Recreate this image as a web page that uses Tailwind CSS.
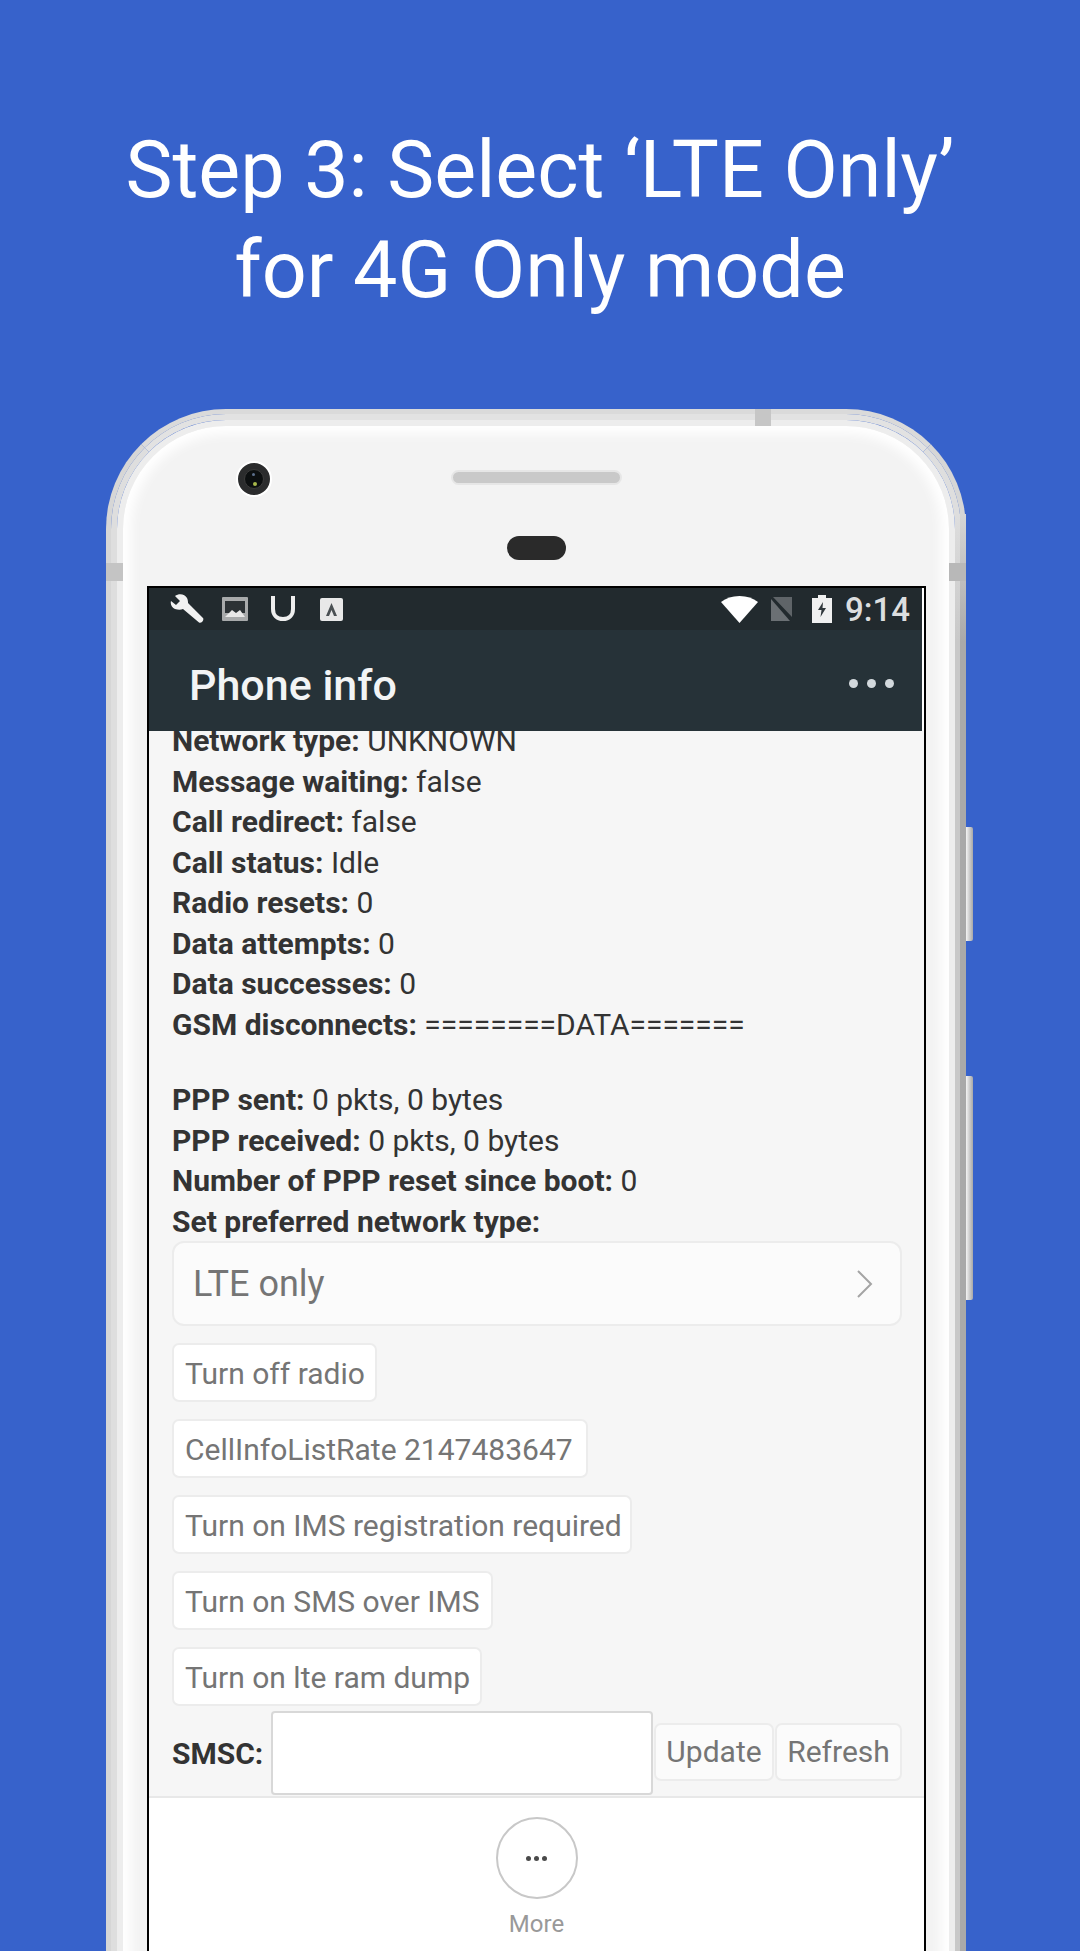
<!DOCTYPE html>
<html lang="en">
<head>
    <meta charset="UTF-8">
    <title>Step 3</title>
    <script src="https://cdn.jsdelivr.net/npm/@tailwindcss/browser@4"></script>
</head>
<body class="bg-[#3762cb] font-['Roboto',sans-serif]">
<div class="w-[1080px] h-[1951px] overflow-hidden">
    <!-- heading -->
    <h1 class="h-[409px] pt-[120px] text-center text-white text-[79px] leading-[100px] font-normal">Step 3: Select ‘LTE Only’<br>for 4G Only mode</h1>

    <!-- phone -->
    <div class="relative ml-[106px] w-[868px] h-[1542px]">
        <!-- side buttons -->
        <div class="absolute left-[860px] top-[418px] w-[7px] h-[114px] rounded-r-[2px] bg-gradient-to-r from-[#f4f4f4] to-[#a8a8a8]"></div>
        <div class="absolute left-[860px] top-[667px] w-[7px] h-[224px] rounded-r-[2px] bg-gradient-to-r from-[#f4f4f4] to-[#a8a8a8]"></div>

        <div class="relative w-[860px] h-[1700px] rounded-[120px] border-[5px] border-[#d6d6d6] border-t-[#dadada]">
            <div class="h-full rounded-[115px] border-[6px] border-[#dedede] border-t-[#e2e2e2]">
                <div class="h-full rounded-[109px] border-[6px] border-[#ededed] bg-[#f3f3f3] shadow-[inset_0_0_12px_8px_#ffffff]"></div>
            </div>
            <!-- darker right edge, below the corner -->
            <div class="absolute right-[-5px] top-[100px] bottom-0 w-[6px] bg-gradient-to-b from-[#d6d6d6] to-[#a9a9a9] to-[8%]"></div>
            <div class="absolute right-[1px] top-[100px] bottom-0 w-[5px] bg-gradient-to-b from-[#dedede] to-[#c8c8c8] to-[8%]"></div>
            <!-- antenna bands -->
            <div class="absolute left-[644px] top-[-5px] w-[16px] h-[17px] bg-[#c6c6c6]"></div>
            <div class="absolute left-[-5px] top-[149px] w-[17px] h-[18px] bg-[#c4c4c4]"></div>
            <div class="absolute right-[-5px] top-[149px] w-[17px] h-[18px] bg-[#b8b8b8]"></div>
        </div>

        <!-- camera, speaker, sensor -->
        <div class="absolute left-[130px] top-[52px] w-[36px] h-[36px] rounded-full bg-[#2b2c2d] border-[2px] border-white flex items-center justify-center">
            <div class="relative w-[20px] h-[20px] rounded-full bg-[#0c0f10] border border-[#3a3a3a]">
                <div class="absolute left-[7px] top-[3px] w-[3px] h-[3px] rounded-full bg-[#5c6f8c]"></div>
                <div class="absolute left-[8px] top-[12px] w-[4px] h-[4px] rounded-full bg-[#a8b84a]"></div>
            </div>
        </div>
        <div class="absolute left-[345px] top-[61px] w-[171px] h-[15px] rounded-full bg-[#c9c9c9] border-[2px] border-[#e6e6e6]"></div>
        <div class="absolute left-[401px] top-[127px] w-[59px] h-[24px] rounded-[12px] bg-[#2a2a2a]"></div>

        <!-- screen -->
        <div class="absolute left-[41px] top-[177px] w-[779px] h-[1400px] border-[2px] border-b-0 border-black bg-white flex flex-col">
            <div class="w-[773px] h-[42px] bg-[#222a2e] flex items-center text-white">
                <svg class="ml-[21px]" width="34" height="30" viewBox="0 0 34 30" fill="#f2f2f2"><path d="M1 7 6 11 10 7 5 2C9 -1 15 0 17 4C18 6 18 8 18 9L33 24C34.500 26 31 30 29 28.500L13 15C11 16 8 16 5 15C2 14 0 10 1 7Z"/></svg>
                <svg class="ml-[18px]" width="26" height="24" viewBox="0 0 26 24"><rect width="26" height="24" rx="1" fill="#a8aaab"/><rect x="3" y="4" width="20" height="12" fill="#2c3235"/><path d="M3 20 10 13 14 16 18 13 23 20Z" fill="#e8e8e8"/></svg>
                <svg class="ml-[22px]" width="26" height="26" viewBox="0 0 26 26" fill="none" stroke="#eeeeee" stroke-width="4"><path d="M3 0V13C3 19 7 23 13 23C19 23 23 19 23 13V0"/></svg>
                <svg class="ml-[24px]" width="23" height="23" viewBox="0 0 23 23"><rect width="23" height="23" rx="2" fill="#e8e8e8"/><path d="M11.500 5 17 18H14L11.500 12 9 18H6Z" fill="#4a5053"/></svg>
                <svg class="ml-[378px]" width="37" height="27" viewBox="0 0 37 27" fill="#ffffff"><path d="M18.500 27 0 6C5 2 11 0 18.500 0C26 0 32 2 37 6Z"/></svg>
                <svg class="ml-[12px]" width="25" height="26" viewBox="0 0 25 26"><path d="M1 1H15L22 1V21L3 1Z" fill="#5f6468"/><path d="M1 3 20 25H1Z" fill="#6b7074"/></svg>
                <svg class="ml-[17px]" width="20" height="28" viewBox="0 0 20 28"><path d="M6 0H14V3H20V28H0V3H6Z" fill="#f0f0f0"/><path d="M11 7 6 15H9.500L8.500 22 14 13H10.500Z" fill="#30373b"/></svg>
                <span class="ml-[13px] text-[33px] leading-none font-medium text-[#dcdedf]">9:14</span>
            </div>
            <div class="w-[773px] h-[101px] bg-[#263238] flex items-center justify-between relative z-10 pl-[40px]">
                <span class="pt-[10px] text-[43px] font-medium text-[#f2f4f5]">Phone info</span>
                <div class="flex gap-[9px] mr-[28px] mt-[5px]">
                    <span class="w-[9px] h-[9px] rounded-full bg-[#d3d9dd]"></span>
                    <span class="w-[9px] h-[9px] rounded-full bg-[#d3d9dd]"></span>
                    <span class="w-[9px] h-[9px] rounded-full bg-[#d3d9dd]"></span>
                </div>
            </div>

            <!-- info list -->
            <div class="h-[1067px] bg-[#f6f6f6] overflow-hidden pl-[23px] pr-[22px] border-b-[2px] border-[#e8e8e8]">
                <div class="-mt-[10px] text-[30px] leading-[40.500px] text-[#333333]">
                    <p><b>Network type:</b> UNKNOWN</p>
                    <p><b>Message waiting:</b> false</p>
                    <p><b>Call redirect:</b> false</p>
                    <p><b>Call status:</b> Idle</p>
                    <p><b>Radio resets:</b> 0</p>
                    <p><b>Data attempts:</b> 0</p>
                    <p><b>Data successes:</b> 0</p>
                    <p><b>GSM disconnects:</b> ========DATA=======</p>
                    <p class="mt-[35px]"><b>PPP sent:</b> 0 pkts, 0 bytes</p>
                    <p><b>PPP received:</b> 0 pkts, 0 bytes</p>
                    <p><b>Number of PPP reset since boot:</b> 0</p>
                    <p><b>Set preferred network type:</b></p>
                </div>
                <div class="-mt-[1px] w-[730px] h-[85px] rounded-[12px] border-[2px] border-[#ececec] bg-[#fbfbfb] flex items-center justify-between pl-[19px] pr-[27px] text-[36px] text-[#757575]">
                    <span>LTE only</span>
                    <svg width="16" height="28" viewBox="0 0 16 28" fill="none" stroke="#a4a4a4" stroke-width="2"><path d="M1 1 14 14 1 27"/></svg>
                </div>
                <div class="mt-[17px] flex flex-col items-start gap-[17px] text-[30px] text-[#757575]">
                    <div class="h-[59px] w-[205px] rounded-[7px] border-[2px] border-[#ececec] bg-white flex items-center pl-[11px] pt-[2px]">Turn off radio</div>
                    <div class="h-[59px] w-[416px] rounded-[7px] border-[2px] border-[#ececec] bg-white flex items-center pl-[11px] pt-[2px]">CellInfoListRate 2147483647</div>
                    <div class="h-[59px] w-[460px] rounded-[7px] border-[2px] border-[#ececec] bg-white flex items-center pl-[11px] pt-[2px]">Turn on IMS registration required</div>
                    <div class="h-[59px] w-[321px] rounded-[7px] border-[2px] border-[#ececec] bg-white flex items-center pl-[11px] pt-[2px]">Turn on SMS over IMS</div>
                    <div class="h-[59px] w-[310px] rounded-[7px] border-[2px] border-[#ececec] bg-white flex items-center pl-[11px] pt-[2px]">Turn on lte ram dump</div>
                </div>
                <div class="mt-[5px] flex items-center text-[30px]">
                    <b class="w-[99px] text-[#333333]">SMSC:</b>
                    <div class="w-[382px] h-[84px] rounded-[4px] border-[2px] border-[#d8d8d8] bg-white"></div>
                    <div class="ml-[1px] -mt-[3px] w-[120px] h-[58px] rounded-[7px] border-[2px] border-[#ececec] bg-[#fbfbfb] text-[#757575] flex items-center justify-center">Update</div>
                    <div class="ml-[1px] -mt-[3px] w-[127px] h-[58px] rounded-[7px] border-[2px] border-[#ececec] bg-[#fbfbfb] text-[#757575] flex items-center justify-center">Refresh</div>
                </div>
            </div>

            <!-- bottom action -->
            <div class="flex flex-col items-center pt-[19px]">
                <div class="w-[82px] h-[82px] rounded-full border-[2px] border-[#c8c8c8] flex items-center justify-center gap-[3px]">
                    <span class="w-[5px] h-[5px] rounded-full bg-[#4a4a4a]"></span>
                    <span class="w-[5px] h-[5px] rounded-full bg-[#4a4a4a]"></span>
                    <span class="w-[5px] h-[5px] rounded-full bg-[#4a4a4a]"></span>
                </div>
                <span class="mt-[10px] text-[24px] leading-[30px] text-[#999999]">More</span>
            </div>
        </div>
    </div>
</div>
</body>
</html>
